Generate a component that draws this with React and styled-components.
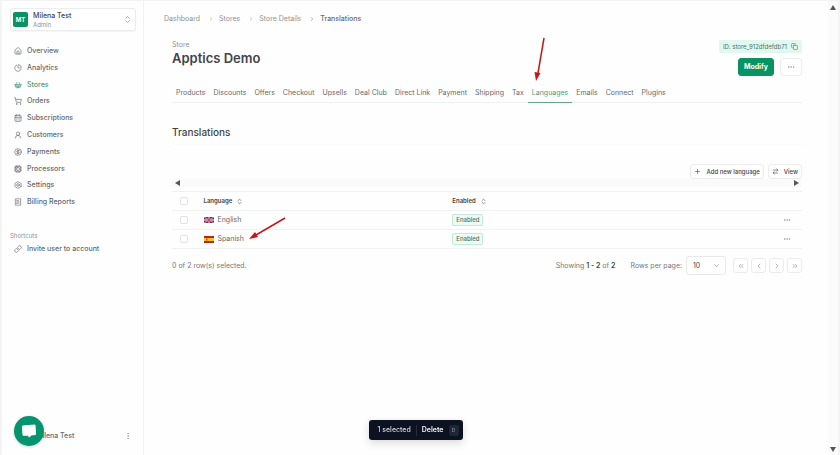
import React from "react";
import styled, { createGlobalStyle, css } from "styled-components";
import {
  House, ChartPie, ShoppingBasket, ShoppingCart, CalendarDays, UserRound, CircleDollarSign,
  Cpu, Bolt, ReceiptText, Link, ChevronsUpDown, ChevronRight, ChevronLeft,
  ChevronsLeft, ChevronsRight, ChevronDown, Copy, Ellipsis, EllipsisVertical, Plus,
  ArrowRightLeft,
} from "lucide-react";

const color = {
  text: "#66696d",
  muted: "#8f9296",
  dark: "#424449",
  line: "#f0f1f2",
  green: "#079462",
  greenText: "#4a9c7c",
};

const GlobalStyle = createGlobalStyle`
  * { box-sizing: border-box; }
  body {
    margin: 0;
    background: #fefefe;
    color: ${color.text};
    font-family: Inter, "Liberation Sans", sans-serif;
    font-size: 7px;
    line-height: 10px;
  }
  button, select, input { font: inherit; color: inherit; margin: 0; }
  button { cursor: pointer; }
  a { color: inherit; text-decoration: none; }
  ul, ol { list-style: none; margin: 0; padding: 0; }
  h1, h2, p { margin: 0; }
  svg { display: block; flex: none; }
`;

const Shell = styled.div`
  display: flex;
  min-height: 100vh;
  border-top: 1px solid #f3f3f4;
  border-left: 2px solid #f4f4f5;
  border-right: 2px solid #f4f4f5;
`;

const Sidebar = styled.aside`
  width: 142px;
  flex: none;
  display: flex;
  flex-direction: column;
  padding: 7px 7px 10px 8px;
  border-right: 1px solid #f1f1f2;
`;

const AccountButton = styled.button`
  display: flex;
  align-items: center;
  gap: 5px;
  height: 23px;
  padding: 0 3px 0 2px;
  text-align: left;
  background: #fff;
  border: 1px solid #ebecee;
  border-radius: 3px;
  box-shadow: 0 1px 1px #0000000a;
`;

const Initials = styled.span`
  display: grid;
  place-items: center;
  width: 15px;
  height: 15px;
  border-radius: 2px;
  background: ${color.green};
  color: #fff;
  font-size: 6px;
  font-weight: 700;
`;

const AccountText = styled.span`
  flex: 1;
  display: grid;
  line-height: 9px;
  color: ${color.dark};
  font-weight: 500;
`;

const AccountRole = styled.small`
  font-size: 6px;
  font-weight: 400;
  color: ${color.muted};
`;

const NavList = styled.ul`
  display: grid;
  grid-auto-rows: 1fr;
  height: 168px;
  margin-top: 12px;
`;

const NavLink = styled.a`
  display: flex;
  align-items: center;
  gap: 5px;
  height: 16px;
  padding-left: 4px;
  font-weight: 500;
  color: ${(p) => (p.$active ? color.greenText : color.text)};
`;

const GroupLabel = styled.h2`
  margin-top: 20px;
  font-size: 6px;
  font-weight: 400;
  color: ${color.muted};
`;

const SidebarFooter = styled.div`
  display: flex;
  align-items: center;
  justify-content: space-between;
  margin-top: auto;
  padding: 0 4px 0 26px;
  font-weight: 500;
  height: 18px;
`;

const PlainButton = styled.button`
  display: inline-grid;
  place-items: center;
  padding: 0;
  border: 0;
  background: none;
  color: ${color.muted};
`;

const Main = styled.main`
  flex: 1;
  min-width: 0;
  padding: 13px 26px 20px 28px;
`;

const Crumbs = styled.ol`
  display: flex;
  align-items: center;
  gap: 8px;
  margin-left: -8px;
  color: ${color.muted};
`;

const Crumb = styled.li`
  display: flex;
  align-items: center;
  gap: 5px;
  ${(p) => p.$current && css`color: ${color.text}; font-weight: 500;`}
`;

const Header = styled.header`
  display: flex;
  justify-content: space-between;
  margin-top: 16px;
`;

const Overline = styled.p`
  color: ${color.muted};
`;

const Title = styled.h1`
  font-size: 13px;
  line-height: 16px;
  font-weight: 600;
  color: ${color.dark};
`;

const HeaderSide = styled.div`
  display: flex;
  flex-direction: column;
  align-items: flex-end;
  gap: 5px;
`;

const IdButton = styled.button`
  display: flex;
  align-items: center;
  gap: 4px;
  height: 13px;
  padding: 0 4px;
  border: 0;
  border-radius: 2px;
  background: #e2f8ef;
  color: #4b7465;
  font-size: 6px;
`;

const Actions = styled.div`
  display: flex;
  gap: 6px;
`;

const HeaderButton = styled.button`
  display: grid;
  place-items: center;
  height: 18px;
  min-width: 22px;
  padding: 0 5px;
  border-radius: 3px;
  border: 1px solid #ebecee;
  background: #fff;
  ${(p) => p.$primary && css`
    border-color: ${color.green};
    background: ${color.green};
    color: #fff;
    font-weight: 700;
  `}
`;

const Tabs = styled.nav`
  display: flex;
  margin-top: 8px;
  border-bottom: 1px solid ${color.line};
`;

const Tab = styled.a`
  position: relative;
  height: 19px;
  padding: 4px 4px 0;
  margin-bottom: -1px;
  border-bottom: 1px solid ${(p) => (p.$active ? "#5fa68a" : "transparent")};
  color: ${(p) => (p.$active ? color.greenText : color.text)};
  white-space: nowrap;
`;

const TabArrow = styled.svg`
  position: absolute;
  left: 3px;
  top: -47px;
`;

const SectionTitle = styled.h2`
  padding: 23px 0 6px;
  border-bottom: 1px solid #fafafa;
  font-size: 10px;
  line-height: 12px;
  font-weight: 500;
  color: ${color.dark};
`;

const Toolbar = styled.div`
  display: flex;
  justify-content: flex-end;
  gap: 4px;
  margin-top: 19px;
`;

const ToolButton = styled.button`
  display: flex;
  align-items: center;
  gap: 5px;
  height: 15px;
  padding: 0 3px;
  border: 1px solid #ececee;
  border-radius: 3px;
  background: #fff;
  color: ${color.dark};
  font-size: 6px;
  font-weight: 500;
`;

const ScrollTrack = styled.div`
  display: flex;
  align-items: center;
  justify-content: space-between;
  height: 8px;
  padding: 0 3px;
  background: #fafafa;
`;

const PageScroll = styled.div`
  width: 10px;
  flex: none;
  display: flex;
  flex-direction: column;
  align-items: center;
  justify-content: space-between;
  padding: 4px 0 3px;
  background: #fbfbfb;
`;

const Table = styled.table`
  width: 100%;
  margin-top: 4px;
  table-layout: fixed;
  border-collapse: collapse;
  border-top: 1px solid ${color.line};
`;

const HeadCell = styled.th`
  width: ${(p) => p.$width};
  height: 19px;
  padding: 0;
  text-align: left;
  font-size: 6px;
  font-weight: 600;
  color: ${color.dark};
  border-bottom: 1px solid ${color.line};
`;

const Cell = styled.td`
  height: 19px;
  padding: 0;
  border-bottom: 1px solid ${color.line};
`;

const Inline = styled.div`
  position: relative;
  display: flex;
  align-items: center;
  gap: 4px;
`;

const CellArrow = styled.svg`
  position: absolute;
  left: 44px;
  top: -18px;
`;

const CheckBox = styled.input`
  appearance: none;
  display: block;
  width: 8px;
  height: 8px;
  margin-left: 8px;
  border: 1px solid #dfe1e4;
  border-radius: 2px;
  background: #fff;
  &:checked { background: ${color.green}; }
`;

const Badge = styled.span`
  display: block;
  width: fit-content;
  height: 12px;
  padding: 0 3px;
  border: 1px solid #c0ebdb;
  border-radius: 2px;
  background: #eefaf5;
  color: #4a7566;
  font-size: 6px;
  font-weight: 500;
`;

const RowMenu = styled(PlainButton)`
  display: grid;
  margin-left: auto;
  margin-right: 11px;
`;

const Footer = styled.div`
  display: flex;
  align-items: center;
  margin-top: 7px;
  color: #75787c;
`;

const Summary = styled.p`
  margin-left: auto;
  margin-right: 15px;
  strong { color: ${color.dark}; font-weight: 600; }
`;

const SelectLabel = styled.label`
  display: flex;
  align-items: center;
  gap: 4px;
`;

const SelectWrap = styled.span`
  position: relative;
  display: block;
  svg { position: absolute; right: 6px; top: 6px; pointer-events: none; }
`;

const Select = styled.select`
  appearance: none;
  display: block;
  width: 40px;
  height: 19px;
  padding: 0 6px;
  border: 1px solid #e8e9eb;
  border-radius: 3px;
  background: #fff;
  color: ${color.dark};
`;

const Pager = styled.div`
  display: flex;
  gap: 3px;
  margin-left: 7px;
`;

const PageButton = styled.button`
  display: grid;
  place-items: center;
  width: 15px;
  height: 15px;
  padding: 0;
  border: 1px solid #eaebed;
  border-radius: 3px;
  background: #fff;
  color: ${color.muted};
`;

const ChatButton = styled.button`
  position: fixed;
  left: 14px;
  bottom: 9px;
  width: 30px;
  height: 30px;
  padding: 0;
  display: grid;
  place-items: center;
  border: 0;
  border-radius: 50%;
  background: #06936f;
  box-shadow: 0 1px 3px #0003;
`;

const SelectionBar = styled.div`
  position: fixed;
  left: 0;
  right: 8px;
  bottom: 15px;
  width: fit-content;
  margin: 0 auto;
  display: flex;
  align-items: center;
  height: 20px;
  padding: 0 4px 0 8px;
  border-radius: 3px;
  background: #0d1222;
  color: #d5d8de;
  font-weight: 500;
  white-space: nowrap;
  box-shadow: 0 3px 8px #00000026;
`;

const DeleteButton = styled.button`
  display: flex;
  align-items: center;
  gap: 5px;
  margin-left: 5px;
  padding: 0 0 0 5px;
  border: 0;
  border-left: 1px solid #262c3b;
  background: none;
  color: #f1f2f4;
  font-weight: 600;
`;

const Key = styled.kbd`
  display: grid;
  place-items: center;
  width: 10px;
  height: 11px;
  border-radius: 2px;
  background: #1f2636;
  color: #8b93a5;
  font: 500 5px/10px Inter, sans-serif;
`;

function Triangle({ points, width, height }) {
  return (
    <svg width={width} height={height} aria-hidden="true">
      <polygon points={points} fill="#54565a" />
    </svg>
  );
}

function UkFlag() {
  return (
    <svg width="10" height="6" viewBox="0 0 20 12" aria-hidden="true">
      <rect width="20" height="12" fill="#35437f" />
      <path d="M0 0 20 12M20 0 0 12" stroke="#e3c6d3" strokeWidth="2" />
      <path d="M0 0 20 12M20 0 0 12" stroke="#c43b55" strokeWidth="1" />
      <path d="M10 0v12M0 6h20" stroke="#f4e9ee" strokeWidth="4" />
      <path d="M10 0v12M0 6h20" stroke="#c52644" strokeWidth="2.4" />
    </svg>
  );
}

function SpainFlag() {
  return (
    <svg width="10" height="7" viewBox="0 0 20 14" aria-hidden="true">
      <rect width="20" height="14" fill="#b9251d" />
      <rect y="4" width="20" height="6" fill="#f6c51e" />
      <rect x="4" y="5" width="3" height="4" fill="#a95b24" />
    </svg>
  );
}

const navItems = [
  ["Overview", House], ["Analytics", ChartPie], ["Stores", ShoppingBasket], ["Orders", ShoppingCart],
  ["Subscriptions", CalendarDays], ["Customers", UserRound], ["Payments", CircleDollarSign],
  ["Processors", Cpu], ["Settings", Bolt], ["Billing Reports", ReceiptText],
];

const tabs = [
  "Products", "Discounts", "Offers", "Checkout", "Upsells", "Deal Club", "Direct Link",
  "Payment", "Shipping", "Tax", "Languages", "Emails", "Connect", "Plugins",
];

const languages = [
  { name: "English", Flag: UkFlag },
  { name: "Spanish", Flag: SpainFlag, pointed: true },
];

const crumbs = ["Dashboard", "Stores", "Store Details", "Translations"];

const pagerButtons = [
  ["First page", ChevronsLeft], ["Previous page", ChevronLeft],
  ["Next page", ChevronRight], ["Last page", ChevronsRight],
];

export default function App() {
  return (
    <>
      <GlobalStyle />
      <Shell>
        <Sidebar>
          <AccountButton>
            <Initials>MT</Initials>
            <AccountText>
              Milena Test
              <AccountRole>Admin</AccountRole>
            </AccountText>
            <ChevronsUpDown size={9} color={color.muted} />
          </AccountButton>
          <nav aria-label="Main">
            <NavList>
              {navItems.map(([label, Icon]) => (
                <li key={label}>
                  <NavLink href="#" $active={label === "Stores"}>
                    <Icon size={8} />
                    {label}
                  </NavLink>
                </li>
              ))}
            </NavList>
          </nav>
          <GroupLabel>Shortcuts</GroupLabel>
          <NavLink href="#">
            <Link size={8} />
            Invite user to account
          </NavLink>
          <SidebarFooter>
            <span>Milena Test</span>
            <PlainButton aria-label="Account menu"><EllipsisVertical size={8} /></PlainButton>
          </SidebarFooter>
        </Sidebar>

        <Main>
          <nav aria-label="Breadcrumb">
            <Crumbs>
              {crumbs.map((label, i) => (
                <Crumb key={label} $current={i === crumbs.length - 1}>
                  {i > 0 && <ChevronRight size={6} />}
                  <a href="#">{label}</a>
                </Crumb>
              ))}
            </Crumbs>
          </nav>

          <Header>
            <div>
              <Overline>Store</Overline>
              <Title>Apptics Demo</Title>
            </div>
            <HeaderSide>
              <IdButton>ID: store_912dfdefdb71 <Copy size={7} /></IdButton>
              <Actions>
                <HeaderButton $primary>Modify</HeaderButton>
                <HeaderButton aria-label="More actions"><Ellipsis size={8} color={color.muted} /></HeaderButton>
              </Actions>
            </HeaderSide>
          </Header>

          <Tabs>
            {tabs.map((label) => (
              <Tab key={label} href="#" $active={label === "Languages"}>
                {label}
                {label === "Languages" && (
                  <TabArrow width="16" height="46" aria-hidden="true">
                    <path d="M13 1 7 36" stroke="#c5161d" strokeWidth="1.5" />
                    <path d="M5 44 3.500 35 9.500 36Z" fill="#c5161d" />
                  </TabArrow>
                )}
              </Tab>
            ))}
          </Tabs>

          <SectionTitle>Translations</SectionTitle>

          <Toolbar>
            <ToolButton><Plus size={7} />Add new language</ToolButton>
            <ToolButton><ArrowRightLeft size={7} />View</ToolButton>
          </Toolbar>
          <ScrollTrack>
            <Triangle width={5} height={6} points="5,0 5,6 0,3" />
            <Triangle width={5} height={6} points="0,0 0,6 5,3" />
          </ScrollTrack>

          <Table>
            <thead>
              <tr>
                <HeadCell $width="5%"><CheckBox type="checkbox" aria-label="Select all" /></HeadCell>
                <HeadCell $width="39.5%"><Inline>Language <ChevronsUpDown size={7} /></Inline></HeadCell>
                <HeadCell><Inline>Enabled <ChevronsUpDown size={7} /></Inline></HeadCell>
                <HeadCell $width="8%" aria-label="Actions" />
              </tr>
            </thead>
            <tbody>
              {languages.map(({ name, Flag, pointed }) => (
                <tr key={name}>
                  <Cell><CheckBox type="checkbox" aria-label={`Select ${name}`} /></Cell>
                  <Cell>
                    <Inline>
                      <Flag />
                      {name}
                      {pointed && (
                        <CellArrow width="40" height="26" aria-hidden="true">
                          <path d="M37 2 8 19" stroke="#c5161d" strokeWidth="1.5" />
                          <path d="M1 23 7 16 10 21Z" fill="#c5161d" />
                        </CellArrow>
                      )}
                    </Inline>
                  </Cell>
                  <Cell><Badge>Enabled</Badge></Cell>
                  <Cell><RowMenu aria-label={`Actions for ${name}`}><Ellipsis size={8} /></RowMenu></Cell>
                </tr>
              ))}
            </tbody>
          </Table>

          <Footer>
            <p>0 of 2 row(s) selected.</p>
            <Summary>Showing <strong>1 - 2</strong> of <strong>2</strong></Summary>
            <SelectLabel>
              Rows per page:
              <SelectWrap>
                <Select defaultValue="10">
                  <option>10</option>
                  <option>20</option>
                  <option>50</option>
                </Select>
                <ChevronDown size={7} />
              </SelectWrap>
            </SelectLabel>
            <Pager>
              {pagerButtons.map(([label, Icon]) => (
                <PageButton key={label} aria-label={label}><Icon size={8} /></PageButton>
              ))}
            </Pager>
          </Footer>
        </Main>

        <PageScroll>
          <Triangle width={6} height={5} points="0,5 6,5 3,0" />
          <Triangle width={6} height={5} points="0,0 6,0 3,5" />
        </PageScroll>
      </Shell>

      <ChatButton aria-label="Open chat">
        <svg width="16" height="14" viewBox="0 0 16 14" aria-hidden="true">
          <path d="M1.500 2 14 1 14.500 10.500 10 11 8.500 13 6.500 11.200 2 11.200Z" fill="#fff" stroke="#fff" strokeLinejoin="round" />
        </svg>
      </ChatButton>

      <SelectionBar>
        1 selected
        <DeleteButton>Delete <Key>D</Key></DeleteButton>
      </SelectionBar>
    </>
  );
}
